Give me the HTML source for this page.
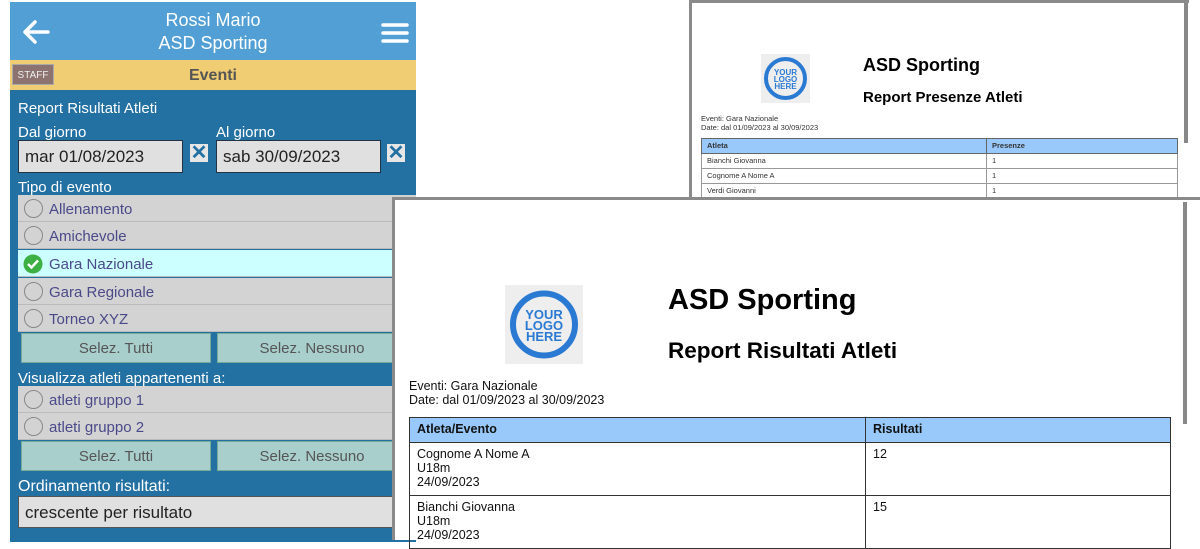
<!DOCTYPE html>
<html><head><meta charset="utf-8"><style>
*{box-sizing:border-box;margin:0;padding:0}
body{width:1200px;height:540px;overflow:hidden;background:#fff;font-family:"Liberation Sans",Arial,sans-serif;position:relative}
.a{position:absolute}
#ph{left:10px;top:2px;width:406px;height:540px;background:#2370a3;overflow:hidden}
.hd{left:0;top:0;width:406px;height:58px;background:#519fd4;color:#fff;text-align:center;font-size:18px;line-height:23px;padding-top:7px}
.yb{left:0;top:58px;width:406px;height:30px;background:#f0cd72;text-align:center;font-weight:bold;color:#555;font-size:16px;line-height:31px}
.staff{left:2px;top:4px;width:42px;height:21px;background:#8c7370;color:#eee;font-size:10px;line-height:21px;text-align:center;font-weight:normal;border:1px solid #aaa}
.lb{color:#fff;font-size:15px}
.in{background:#e0e0e0;border:1px solid #234;color:#222;font-size:17px;padding-left:6px;line-height:31px}
.xb{width:22px;height:22px;border:2px solid #2370a3;color:#2370a3;font-weight:bold;font-size:20px;line-height:18px;text-align:center;background:#e6e6e6}
.row{left:8px;width:400px;height:27px;background:#d3d3d3;border-bottom:1px solid #bbb;color:#4a4a8a;font-size:15px;line-height:29px;padding-left:31px}
.row .r{position:absolute;left:6px;top:4px;width:19px;height:19px;border:1px solid #888;border-radius:50%}
.bt{height:30px;background:#a9cfcd;border:1px solid #7a9;color:#555;font-size:15px;line-height:30px;text-align:center}
.doc{background:#fff;border-left:3px solid #8a8a8a;border-top:3px solid #8a8a8a}
table{border-collapse:collapse;position:absolute}
td,th{text-align:left;vertical-align:top}
</style></head><body>
<div id="ph" class="a">
<div class="a hd">Rossi Mario<br>ASD Sporting</div>
<svg class="a" style="left:10px;top:16px" width="32" height="28" viewBox="0 0 32 28"><path d="M28 14H5M15 4L5 14l10 10" stroke="#fff" stroke-width="3.5" fill="none" stroke-linecap="round" stroke-linejoin="round"/></svg>
<svg class="a" style="left:371px;top:20px" width="28" height="22"><path d="M2 3h24M2 11h24M2 19h24" stroke="#fff" stroke-width="3.5" stroke-linecap="round"/></svg>
<div class="a yb">Eventi<div class="a staff">STAFF</div></div>
<div class="a lb" style="left:8px;top:98px">Report Risultati Atleti</div>
<div class="a lb" style="left:8px;top:122px">Dal giorno</div>
<div class="a lb" style="left:206px;top:122px">Al giorno</div>
<div class="a in" style="left:8px;top:138px;width:165px;height:33px">mar 01/08/2023</div>
<div class="a xb" style="left:178px;top:140px">✕</div>
<div class="a in" style="left:206px;top:138px;width:165px;height:33px">sab 30/09/2023</div>
<div class="a xb" style="left:375px;top:140px">✕</div>
<div class="a lb" style="left:8px;top:177px">Tipo di evento</div>
<div class="a row" style="top:193px"><span class="r"></span>Allenamento</div>
<div class="a row" style="top:220px"><span class="r"></span>Amichevole</div>
<div class="a row" style="top:248px;background:#ccffff"><svg class="a" style="left:5px;top:4px" width="20" height="20"><circle cx="10" cy="10" r="9.5" fill="#3cb043"/><path d="M5 10l3.5 3.5L15 6.5" stroke="#fff" stroke-width="2.5" fill="none"/></svg>Gara Nazionale</div>
<div class="a row" style="top:276px"><span class="r"></span>Gara Regionale</div>
<div class="a row" style="top:303px"><span class="r"></span>Torneo XYZ</div>
<div class="a bt" style="left:11px;top:331px;width:190px">Selez. Tutti</div>
<div class="a bt" style="left:207px;top:331px;width:190px">Selez. Nessuno</div>
<div class="a lb" style="left:8px;top:368px">Visualizza atleti appartenenti a:</div>
<div class="a row" style="top:384px"><span class="r"></span>atleti gruppo 1</div>
<div class="a row" style="top:411px"><span class="r"></span>atleti gruppo 2</div>
<div class="a bt" style="left:11px;top:439px;width:190px">Selez. Tutti</div>
<div class="a bt" style="left:207px;top:439px;width:190px">Selez. Nessuno</div>
<div class="a lb" style="left:8px;top:476px;font-size:16px">Ordinamento risultati:</div>
<div class="a in" style="left:8px;top:494px;width:400px;height:32px;border-color:#555">crescente per risultato</div>
</div>

<div class="a doc" style="left:689px;top:0;width:500px;height:200px">
<div class="a" style="left:492px;top:0;width:4px;height:140px;background:#888"></div>
<div class="a" style="left:69px;top:51px;width:49px;height:49px;background:#eee"><svg width="49" height="49"><circle cx="24.5" cy="24.5" r="19.5" stroke="#2a7ad3" stroke-width="4" fill="none"/><text x="24.5" y="21" font-size="8" font-weight="bold" fill="#2a7ad3" text-anchor="middle" font-family="Liberation Sans">YOUR</text><text x="24.5" y="28" font-size="8" font-weight="bold" fill="#2a7ad3" text-anchor="middle" font-family="Liberation Sans">LOGO</text><text x="24.5" y="35" font-size="8" font-weight="bold" fill="#2a7ad3" text-anchor="middle" font-family="Liberation Sans">HERE</text></svg></div>
<div class="a" style="left:171px;top:52px;font-size:18px;font-weight:bold">ASD Sporting</div>
<div class="a" style="left:171px;top:86px;font-size:15px;font-weight:bold">Report Presenze Atleti</div>
<div class="a" style="left:9px;top:111px;font-size:7.5px;line-height:9px;color:#333">Eventi: Gara Nazionale<br>Date: dal 01/09/2023 al 30/09/2023</div>
<div class="a" style="left:-3px;top:-3px;width:500px;height:3px;background:#8a8a8a"></div>
<table style="left:9px;top:135px;width:477px;font-size:7.5px;color:#333">
<tr style="background:#99c9fa;height:15px"><th style="border:1px solid #666;padding:2px 5px;width:285px">Atleta</th><th style="border:1px solid #666;padding:2px 5px">Presenze</th></tr>
<tr style="height:15px"><td style="border:1px solid #999;padding:2px 5px">Bianchi Giovanna</td><td style="border:1px solid #999;padding:2px 5px">1</td></tr>
<tr style="height:15px"><td style="border:1px solid #999;padding:2px 5px">Cognome A Nome A</td><td style="border:1px solid #999;padding:2px 5px">1</td></tr>
<tr style="height:15px"><td style="border:1px solid #999;padding:2px 5px">Verdi Giovanni</td><td style="border:1px solid #999;padding:2px 5px">1</td></tr>
</table>
</div>

<div class="a doc" style="left:392px;top:197px;width:808px;height:343px">
<div class="a" style="left:788px;top:2px;width:4px;height:222px;background:#888"></div>
<div class="a" style="left:110px;top:85px;width:78px;height:79px;background:#eee"><svg width="78" height="79"><circle cx="39" cy="39.5" r="31" stroke="#2a7ad3" stroke-width="6" fill="none"/><text x="39" y="34" font-size="13" font-weight="bold" fill="#2a7ad3" text-anchor="middle" font-family="Liberation Sans">YOUR</text><text x="39" y="45" font-size="13" font-weight="bold" fill="#2a7ad3" text-anchor="middle" font-family="Liberation Sans">LOGO</text><text x="39" y="56" font-size="13" font-weight="bold" fill="#2a7ad3" text-anchor="middle" font-family="Liberation Sans">HERE</text></svg></div>
<div class="a" style="left:273px;top:84px;font-size:29px;font-weight:bold">ASD Sporting</div>
<div class="a" style="left:273px;top:138px;font-size:22.5px;font-weight:bold">Report Risultati Atleti</div>
<div class="a" style="left:14px;top:179px;font-size:12.5px;line-height:14px;color:#111">Eventi: Gara Nazionale<br>Date: dal 01/09/2023 al 30/09/2023</div>
<table style="left:14px;top:217px;width:762px;font-size:12.5px;line-height:14px;color:#111">
<tr style="background:#99c9fa;height:25px"><th style="border:1px solid #333;padding:4px 7px;width:456px">Atleta/Evento</th><th style="border:1px solid #333;padding:4px 7px">Risultati</th></tr>
<tr style="height:53px"><td style="border:1px solid #333;padding:4px 7px">Cognome A Nome A<br>U18m<br>24/09/2023</td><td style="border:1px solid #333;padding:4px 7px">12</td></tr>
<tr style="height:53px"><td style="border:1px solid #333;padding:4px 7px">Bianchi Giovanna<br>U18m<br>24/09/2023</td><td style="border:1px solid #333;padding:4px 7px">15</td></tr>
</table>
</div>
</body></html>
